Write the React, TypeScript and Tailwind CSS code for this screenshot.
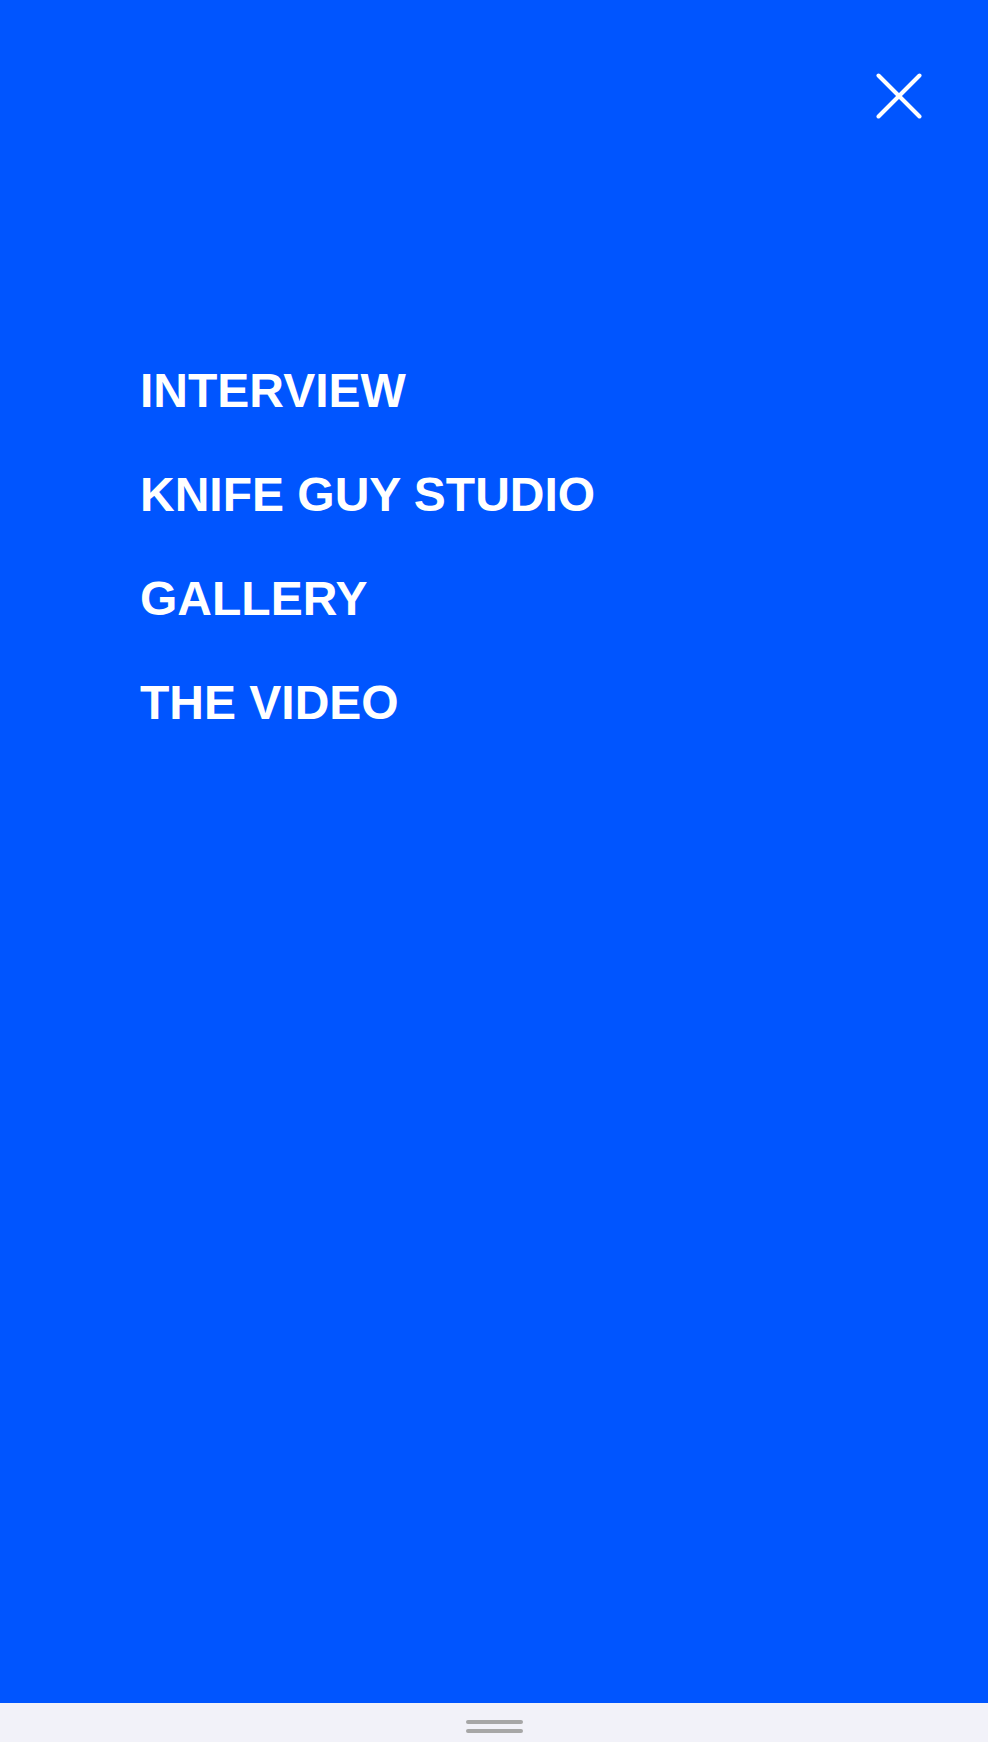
import React from "react";

const links = ["INTERVIEW", "KNIFE GUY STUDIO", "GALLERY", "THE VIDEO"];

function CloseIcon(): React.JSX.Element {
  return (
    <svg width="46" height="46" viewBox="0 0 46 46" fill="none" stroke="white" strokeWidth={4} strokeLinecap="round">
      <path d="M2.5 2.5 L43.5 43.5" />
      <path d="M43.5 2.5 L2.5 43.5" />
    </svg>
  );
}

export default function App(): React.JSX.Element {
  return (
    <div className="flex flex-col h-[1742px] w-full font-['Liberation_Sans',Arial,sans-serif]">
      {/* Menu overlay */}
      <div className="flex-1 flex flex-col bg-[#0055ff]">
        <div className="flex justify-end pt-[73px] pr-[66px]">
          <button className="block" aria-label="Close menu">
            <CloseIcon />
          </button>
        </div>

        <nav className="mt-[248px] pl-[140px] flex flex-col gap-[56px]">
          {links.map((link) => (
            <a key={link} href="#" className="text-white text-[48px] leading-[48px] font-bold">
              {link}
            </a>
          ))}
        </nav>
      </div>

      {/* Bottom handle bar */}
      <div className="h-[39px] bg-[#f2f2f9] flex flex-col items-center pt-[17px] gap-[5px]">
        <div className="w-[57px] h-[4px] rounded-full bg-[#a7a7a7]" />
        <div className="w-[57px] h-[4px] rounded-full bg-[#a7a7a7]" />
      </div>
    </div>
  );
}
